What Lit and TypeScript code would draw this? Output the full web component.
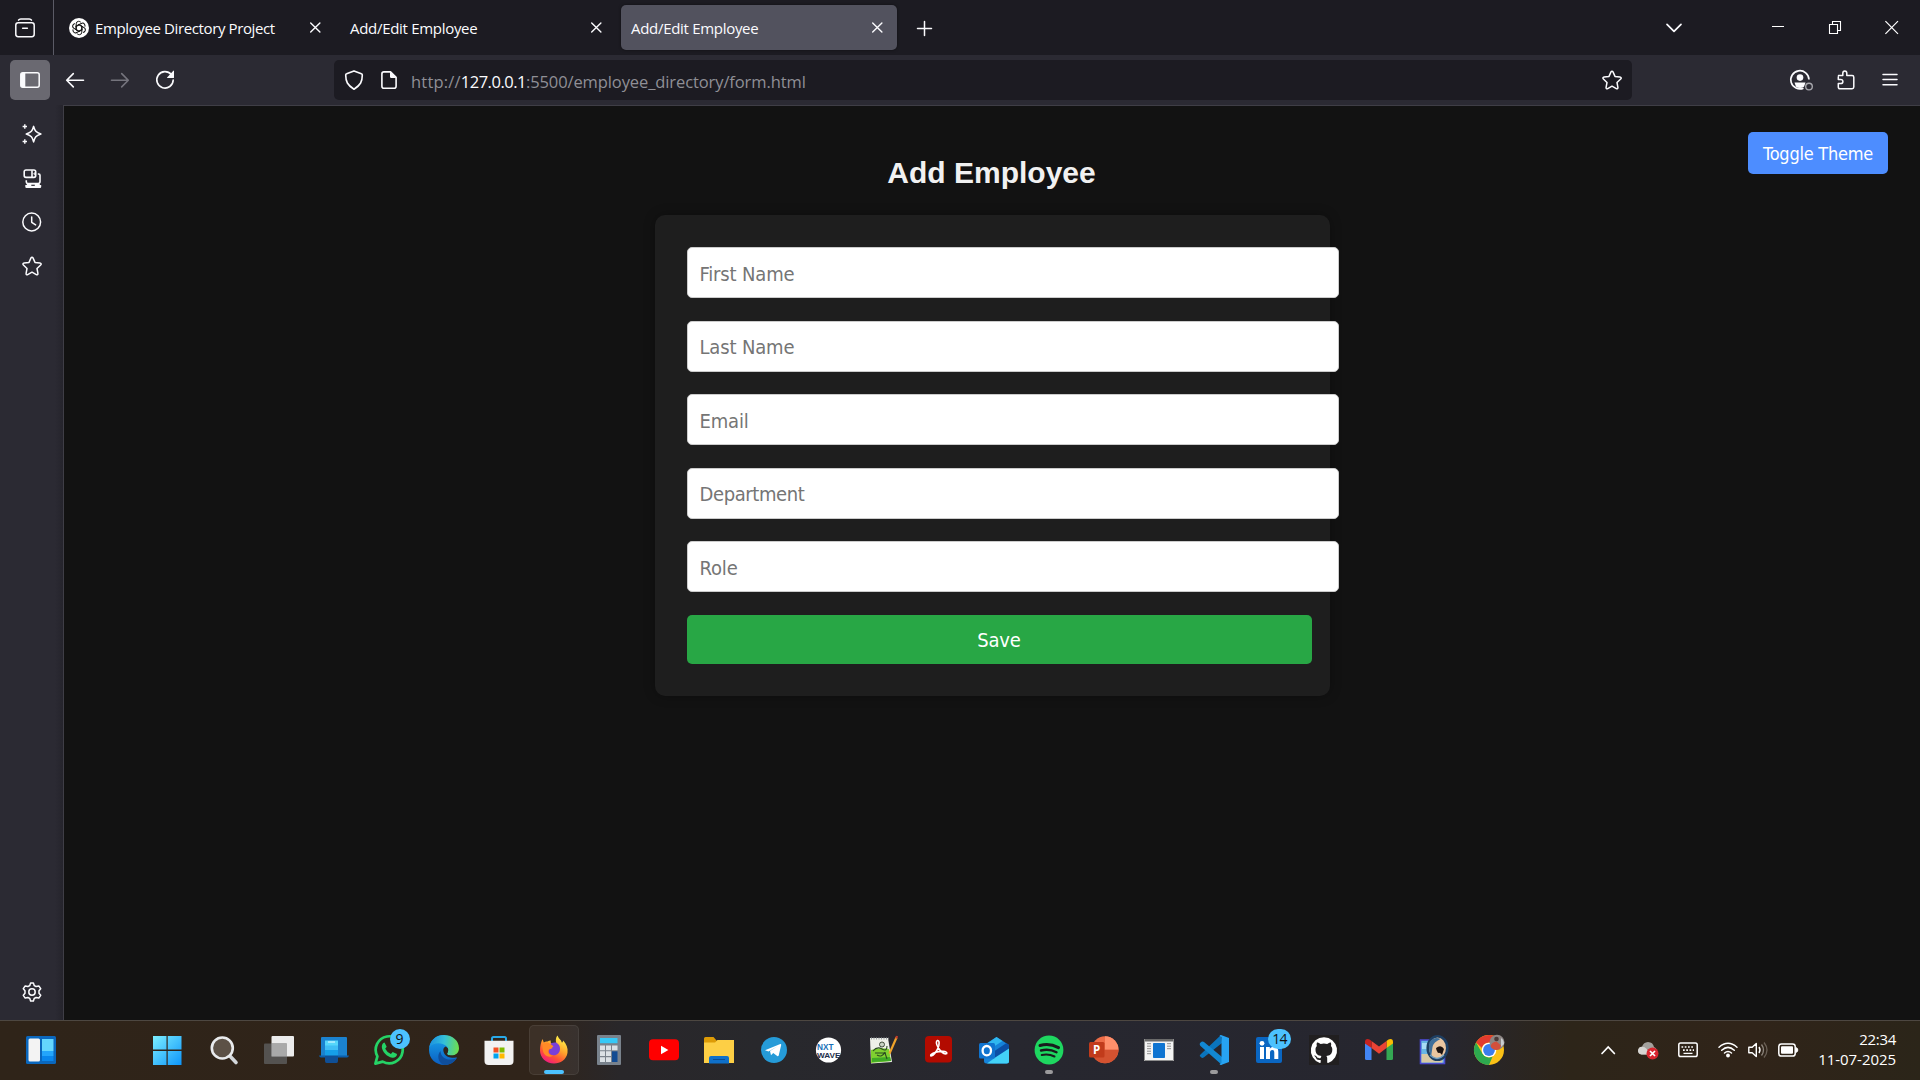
import { LitElement, html, svg, css, SVGTemplateResult } from "lit";
import { customElement } from "lit/decorators.js";

type Art = SVGTemplateResult;

const box = (w: number, h: number, view: string, art: Art) =>
  html`<svg class="icon" width=${w} height=${h} viewBox=${view} aria-hidden="true">${art}</svg>`;

/* ---------- browser glyphs, drawn on a 20 unit grid ---------- */
const STAR = svg`<path d="M10 1.2c.5 0 .8.3 1 .7l2 4.5 4.900.6c1.300.2 1.700 1.200.8 2L15 12.500l.9 4.900c.2 1.200-.7 1.700-1.600 1.200L10 16.200l-4.300 2.400c-1 .5-1.800 0-1.600-1.200L5 12.500 1.400 9c-.900-.9-.5-1.800.7-2L7 6.400l2-4.500c.2-.4.5-.7 1-.7z" fill="none" stroke="#fbfbfe" stroke-width="1.500" stroke-linejoin="round"/>`;

const G: Record<string, Art> = {
  archive: svg`<g fill="none" stroke="#fbfbfe" stroke-width="1.500"><path d="M3.500 2.200Q4.200.9 5.800.9h8.400q1.600 0 2.300 1.300" stroke-linecap="round"/><rect x=".8" y="4.800" width="18.400" height="13.900" rx="2.400"/><path d="M7.600 10.200h4.800" stroke-linecap="round"/></g>`,
  panel: svg`<rect x=".8" y="2.800" width="18.400" height="14.400" rx="2" fill="none" stroke="#fbfbfe" stroke-width="1.500"/><path d="M2 3h3.300v14H2L.9 16V4z" fill="#fbfbfe"/>`,
  back: svg`<path d="M18.500 10.300H2M8.300 3.600L1.700 10.300l6.600 6.600" fill="none" stroke="#fbfbfe" stroke-width="1.600" stroke-linecap="round" stroke-linejoin="round"/>`,
  forward: svg`<path d="M1.500 10.300H18M11.700 3.600l6.600 6.700-6.600 6.600" fill="none" stroke="#75747d" stroke-width="1.600" stroke-linecap="round" stroke-linejoin="round"/>`,
  reload: svg`<path d="M16.300 4.600A8.200 8.200 0 1 0 18.200 10" fill="none" stroke="#fbfbfe" stroke-width="1.600" stroke-linecap="round"/><path d="M19 1.200v6.300q0 .6-.6.6h-5.900q-.9 0-.4-.7l6-6.500q.9-.7.9.3z" fill="#fbfbfe"/>`,
  shield: svg`<path d="M10 .9l7.400 2.900q.9.300.9 1.300c0 6.400-1.700 10-8.300 14.100C3.400 15.100 1.700 11.500 1.700 5.100q0-1 .9-1.300z" fill="none" stroke="#fbfbfe" stroke-width="1.600" stroke-linejoin="round"/>`,
  page: svg`<path d="M4.900 1.900h6.600l5.600 5.500v8.800q0 2-2 2H4.900q-2 0-2-2V3.900q0-2 2-2z" fill="none" stroke="#fbfbfe" stroke-width="1.600" stroke-linejoin="round"/><path d="M11 1.500l6.500 6.500h-5.300q-1.200 0-1.200-1.200z" fill="#fbfbfe"/>`,
  star: STAR,
  sparkle: svg`<path d="M11.600 2.400c1.300 4.700 2.200 5.900 7.300 7.600-5.100 1.700-6 2.900-7.300 7.900-1.300-5-2.200-6.200-7.300-7.900 5.100-1.700 6-2.900 7.300-7.600z" fill="none" stroke="#fbfbfe" stroke-width="1.600" stroke-linejoin="round"/><path d="M2.800.3v4.400M.6 2.500H5M2.800 15.300v4.400M.6 17.500H5" stroke="#fbfbfe" stroke-width="1.400"/>`,
  devices: svg`<g transform="translate(.3 .7)"><g fill="none" stroke="#fbfbfe" stroke-width="1.600"><rect x="1.900" y="1.300" width="11.500" height="7.400" rx="1.800"/><path d="M9.700 1.500v7M4 11.600v1.600q0 1.600 1.700 1.600h10q2 0 2-2V6.500q0-1.200-1.200-1.200H15.500" /></g><path d="M12.500 3.200v3.600l-1.600-1.800zM3 16.300h15.900v1.800q0 1.200-1.200 1.200H4.200q-1.200 0-1.200-1.200zM4.500 15h13v2h-13z" fill="#fbfbfe"/><rect x="9" y="16" width="3.500" height="1.200" fill="#2b2a33"/></g>`,
  clock: svg`<g fill="none" stroke="#fbfbfe" stroke-width="1.500"><circle cx="9.700" cy="10" r="8.900"/><path d="M9.700 5v5.300l3.900 2.600" stroke-linecap="round" stroke-linejoin="round"/></g>`,
  gear: svg`<g fill="none" stroke="#fbfbfe" stroke-width="1.500" stroke-linejoin="round"><path d="M8.600.9h2.800l.8 2.600 1.900 1.100 2.700-.7 1.900 2.800-1.700 2v2.600l1.700 2-1.900 2.800-2.700-.7-1.900 1.100-.8 2.600H8.600l-.8-2.600-1.900-1.100-2.700.7-1.900-2.800 1.700-2V8.700l-1.700-2 1.900-2.800 2.700.7 1.900-1.100z"/><circle cx="10" cy="10" r="3.200"/></g>`,
  account: svg`<path d="M13.500 18.200A9.100 9.100 0 1 1 19 9.500" fill="none" stroke="#fbfbfe" stroke-width="1.700"/><circle cx="10" cy="7.600" r="3.300" fill="#fbfbfe"/><path d="M4.500 12.600h11l-1.500 4.200q-4 2.400-8 0z" fill="#fbfbfe"/><circle cx="19" cy="16.600" r="3.300" fill="#2b2a33" stroke="#a6a6ac" stroke-width="1.400"/>`,
  puzzle: svg`<path d="M2.500 5.500h4.300V3.200q0-2.300 2-2.300t2 2.300v2.300h5.300q1.700 0 1.700 1.700v9.900q0 1.700-1.700 1.700H4q-1.700 0-1.700-1.700v-3.500h2.400q2.200 0 2.200-2.100T4.700 9.400H2.300V6.800" fill="none" stroke="#fbfbfe" stroke-width="1.500" stroke-linejoin="round" stroke-linecap="round"/>`,
  menu: svg`<path d="M3 4.400h14M3 9.500h14M3 14.700h14" stroke="#fbfbfe" stroke-width="1.500" stroke-linecap="round"/>`,
  chevron: svg`<path d="M3 6.300l7 7 7-7" fill="none" stroke="#fbfbfe" stroke-width="1.700" stroke-linecap="round" stroke-linejoin="round"/>`,
  close: svg`<path d="M5.700 4.900l9.200 9.200M14.900 4.900l-9.200 9.200" stroke="#fbfbfe" stroke-width="1.400" stroke-linecap="round"/>`,
  plus: svg`<path d="M9.500 3.500v14M2.500 10.500h14" stroke="#fbfbfe" stroke-width="1.500" stroke-linecap="round"/>`,
  minimize: svg`<path d="M4 8.500h12" stroke="#fff"/>`,
  restore: svg`<path d="M4.500 6.500h8v9h-8zM7.500 6V3.500h8v9H13" fill="none" stroke="#fff" stroke-width="1.100"/>`,
  exit: svg`<path d="M3.400 3.200l12.600 12.600M16 3.200L3.400 15.800" stroke="#fff" stroke-width="1.200"/>`,
  gpt: svg`<circle cx="10" cy="10" r="10" fill="#fff"/><g fill="none" stroke="#111" stroke-width="1">${[0, 60, 120, 180, 240, 300].map(
    (a) => svg`<path transform="rotate(${a} 10 10)" d="M7.200 9.200V5.800q0-2.300 2.300-2.500 1.400 0 2.300.9M7.300 8.500l3-1.800 3.200 1.800"/>`)}</g>`,
};

const glyph = (name: string, size = 20) => box(size, size, "0 0 20 20", G[name]);

/* ---------- taskbar apps, drawn on a 30 unit grid ---------- */
interface App { id: string; art: Art; badge?: string; state?: "active" | "running" }

const APPS: App[] = [
  { id: "start", art: svg`<defs><linearGradient id="w" x1="0" y1="0" x2="30" y2="30" gradientUnits="userSpaceOnUse"><stop offset="0" stop-color="#7ef0ff"/><stop offset="1" stop-color="#0a93fb"/></linearGradient></defs><path d="M0 1h13.500v13.500H0zM14.700 1h13.800v13.500H14.700zM0 15.900h13.500V30H0zM14.700 15.900h13.800V30H14.700z" fill="url(#w)" transform="translate(-1 0)"/>` },
  { id: "search", art: svg`<path d="M19.500 19.500l7.500 8" stroke="#d3d7db" stroke-width="3.600" stroke-linecap="round"/><circle cx="13.300" cy="13" r="10.500" fill="#5c5146" stroke="#e9ebed" stroke-width="2.600"/>` },
  { id: "taskview", art: svg`<rect x="7.500" y="1" width="22.500" height="20.500" rx="1" fill="#ececec"/><rect x="0" y="8.500" width="23" height="20.500" rx="1" fill="#5a5a5a" opacity=".85"/><path d="M7.500 8.500H23v13H7.500z" fill="#a9a9a9"/>` },
  { id: "phone", art: svg`<rect x="2" y="2" width="26" height="20" rx="1" fill="#1b82cf"/><path d="M0 20.500h30q-.5 2-2 2H2q-1.500 0-2-2z" fill="#0b5fad"/><path d="M6 5.500h13V16H6z" fill="#55d6fb"/><path d="M6 10.500h13V16H6z" fill="#3fbef5"/><path d="M6 15h13v6H6z" fill="#169fe8"/><path d="M6 20.500h13V26q0 2-1.500 2h-10Q6 28 6 26z" fill="#0f4f96"/><path d="M9 7h7" stroke="#e9fbff"/>` },
  { id: "whatsapp", badge: "9", art: svg`<path d="M1.400 28.600l2-7.300A13.500 13.500 0 1 1 8.700 26.600z" fill="none" stroke="#25d366" stroke-width="2.700" stroke-linejoin="round"/><path d="M10.500 7.500l2.200 4.200-1.500 2q2 3.800 5.700 5.300l1.800-2 4.300 2.100c0 3-2.600 4-4.700 3.700C12.800 21.800 8.200 16.500 7.800 12c0-2 1-4.200 2.700-4.500z" fill="#25d366"/>` },
  { id: "edge", art: svg`<defs><linearGradient id="e1" x1="0" y1="8" x2="30" y2="12" gradientUnits="userSpaceOnUse"><stop offset="0" stop-color="#1c8fe0"/><stop offset=".5" stop-color="#35c1d8"/><stop offset="1" stop-color="#6fe04a"/></linearGradient><linearGradient id="e2" x1="0" y1="8" x2="0" y2="28" gradientUnits="userSpaceOnUse"><stop offset="0" stop-color="#1593e2"/><stop offset="1" stop-color="#0c62c4"/></linearGradient></defs><path d="M0 15C0 6 6.500 0 15 0c4 2 9 8 7 12l-5 2c-1 5 4 8.500 9 8.500.8 0 1.700-.2 1.900.2C25 27.500 20.500 30 15.500 30 6.500 30 0 23.500 0 15z" fill="url(#e2)"/><path d="M.3 12.500C1.800 4.600 8 0 15 0c8.800 0 15 6 15 13.200 0 4.500-3.300 7.300-7.300 7.300-3 0-5.200-1-4.500-2.300 1.500-2.400 1.500-5.500-1.200-7.400C12.500 7 4 7.500.3 12.500z" fill="url(#e1)"/><path d="M11.500 16c0 5.500 5 9 10.500 8.500 2.600-.2 4.800-.7 5.900-1.800C25 27.500 20.500 30 15.500 30 9 28.500 7.500 20 11.500 16z" fill="#0f4e9c"/><path d="M16.800 11.400c3 1.700 2.800 4.600 1.400 6.800-.7 1.400 1.500 2.300 4.500 2.300 1.800 0 3.300-.5 4.600-1.300l.8 2.300c-5 2.600-12.600 1-13.700-5.500-.4-2.400.4-3.600 2.400-4.600z" fill="#30241b"/>` },
  { id: "store", art: svg`<path d="M8 7V3.500q0-1.500 1.500-1.500h11Q22 2 22 3.500V7" fill="none" stroke="#29a9e8" stroke-width="2"/><path d="M.5 5.800h29V26q0 4-4 4h-21q-4 0-4-4z" fill="#f2f2f2"/><path d="M9.500 12.500h5v5h-5z" fill="#f25022"/><path d="M15.500 12.500h5v5h-5z" fill="#7fba00"/><path d="M9.500 18.500h5v5h-5z" fill="#00a4ef"/><path d="M15.500 18.500h5v5h-5z" fill="#ffb900"/>` },
  { id: "firefox", state: "active", art: svg`<defs><linearGradient id="ff" x1="22" y1="2" x2="7" y2="28" gradientUnits="userSpaceOnUse"><stop offset="0" stop-color="#fff24a"/><stop offset=".4" stop-color="#ffa52c"/><stop offset=".7" stop-color="#ff5333"/><stop offset="1" stop-color="#f0138c"/></linearGradient></defs><path d="M3.500 4l1.300 3.500Q6.500 6.200 8.500 6.500q1.500-1 3.200-1-.2 2 .5 3l5-.5Q16 3.500 18.500.5q1 3 3.500 5 .5 1.300 1 2.200 1-.8 1.200-2.200c3.200 3.500 5 7.500 4.300 12.200C27.500 24.500 21.500 28.500 15 28.500 7 28.500 1 22.500 1 15.500 1 11 2 7 3.500 4z" fill="url(#ff)"/><path d="M10 10.500q2-3.500 7-3 4 2 4 6.300c0 4-3 6.700-6.500 6.500-4.500-.3-6-4-4-6l3-1.300z" fill="#7a3fd8"/><path d="M3.500 9.500q4-3.500 7.500-.7l3.500 2.400-2.300 2.300q-2.700.3-3 2.200 0 4.500 5 5-7 3-10-3.700Q3.200 13 3.500 9.500z" fill="#ff8a26"/>` },
  { id: "calc", art: svg`<rect x="3" y="0" width="24" height="30" rx="1" fill="#79828c"/><path d="M6 3h17.500v5.200H6z" fill="#35c8f6"/><path d="M6 10.500h5v4.800H6zM12 10.500h5v4.800h-5zM18 10.500h5.500v4.800H18zM6 16.300h5v4.800H6zM12 16.300h5v4.800h-5zM6 22.200h5V27H6zM12 22.200h5V27h-5z" fill="#dbe1e6"/><path d="M18 16.300h5.500V27H18z" fill="#124b92"/>` },
  { id: "youtube", art: svg`<rect x="0" y="4.300" width="30" height="21" rx="4" fill="#f00"/><path d="M12 10.800v8.500l7.400-4.250z" fill="#fff"/>` },
  { id: "folder", art: svg`<path d="M0 3.500Q0 2 1.500 2h8l3 3.500H16V12H0z" fill="#dd9b06"/><path d="M0 7.500h11L13.500 5H30v23H0z" fill="#fdcf45"/><path d="M5 28.500V23q0-2 2-2h16q2 0 2 2v5.500z" fill="#0f70c9"/><path d="M9 24.500h12" stroke="#0a4c93"/>` },
  { id: "telegram", art: svg`<circle cx="15" cy="15" r="13" fill="#259bd8"/><path d="M6 15.300l15.300-6.200q1-.2.9.9L19.700 20.500q-.4 1.200-1.500.6l-4-3-2.200 2.100-1-4.200 8-5-9.500 5.400z" fill="#fff"/>` },
  { id: "nxt", art: svg`<circle cx="14.500" cy="15" r="12.600" fill="#fff"/><g font-family="Liberation Sans, sans-serif" font-weight="bold"><text x="3" y="14.500" font-size="9" textLength="16.500" lengthAdjust="spacingAndGlyphs" fill="#176fb8">NXT</text><text x="3" y="22.500" font-size="8" textLength="23.500" lengthAdjust="spacingAndGlyphs" fill="#1d2f4c">WAVE</text></g>` },
  { id: "notepad", art: svg`<path d="M1 3h18l4 24-21 1.500z" fill="#eef0e8"/><path d="M2 15q9-3 18-1l2 12-20 2z" fill="#7fd030"/><path d="M3 23l18-1 1.200 4L3 27z" fill="#3faa25"/><path d="M2 3.500h18" stroke="#9aa0a6" stroke-dasharray="1 1.500" stroke-width="2"/><circle cx="13" cy="9.500" r="2.500" fill="#c9d3c4" stroke="#33402e" stroke-width=".9"/><path d="M4 16q4-5 9-2t5-3M8 20q5 3 8-3M6 18h11M16 18l2 6" fill="none" stroke="#2b4a22" stroke-width="1.100"/><path d="M27.500 2.500l-7 16" stroke="#efa32a" stroke-width="2.200"/><path d="M28 1l-.8 2.500" stroke="#c33b2c" stroke-width="2.200"/>` },
  { id: "acrobat", art: svg`<rect x="1" y="1" width="27" height="26.500" rx="4" fill="#b30b00"/><path d="M13.500 5.500q2.300-.3 1.300 5-1.500 6-6 9.800-2.800 1.500-1.800-.6 4-3.500 12-3.300 4.500.4 3.700 2.200-2 1-4.700-1.300-5-5-5.600-9.300-.1-2.200 1.100-2.500z" fill="none" stroke="#fff" stroke-width="1.600"/>` },
  { id: "outlook", art: svg`<path d="M5 10L17.500 2 30 10v16q0 2.500-2.500 2.500h-20Q5 28.500 5 26z" fill="#1683d9"/><path d="M6 10l11.500-8 6 4L8 16z" fill="#2fb7ef"/><path d="M27.500 8l2.500 2v5L17 23l-6-4z" fill="#0b4fa5"/><path d="M30 13.500V26q0 2.500-2.500 2.500H8L17 22z" fill="#43d2f7"/><rect x="0" y="8" width="16" height="15.500" rx="1.500" fill="#1074cf"/><ellipse cx="7.800" cy="15.700" rx="4.200" ry="4.700" fill="none" stroke="#fff" stroke-width="2.300"/>` },
  { id: "spotify", state: "running", art: svg`<circle cx="15" cy="15" r="14.400" fill="#1ed760"/><g fill="none" stroke="#191c1d" stroke-linecap="round"><path d="M6 10.500q9.500-2.700 18.500 2.100" stroke-width="3"/><path d="M7 15.500q8-2.200 15.500 1.700" stroke-width="2.400"/><path d="M7.700 20q6.800-1.600 12.800 1.500" stroke-width="2"/></g>` },
  { id: "powerpoint", art: svg`<circle cx="16" cy="14.700" r="13.500" fill="#ed6c47"/><path d="M16 1.200a13.500 13.500 0 0 1 13.500 13.500H16z" fill="#ff8f6b"/><path d="M2.500 14.700h27a13.500 13.500 0 0 1-27 0z" fill="#d35230"/><rect x="0" y="7" width="15.500" height="15.500" rx="1.500" fill="#c13b1b"/><text x="7.700" y="19" text-anchor="middle" font-family="Open Sans, sans-serif" font-weight="bold" font-size="11.500" fill="#fff">P</text>` },
  { id: "window", art: svg`<path d="M0 4h30v22H0z" fill="#f4f4f4"/><path d="M0 4h30v2.500H0z" fill="#6b6b6b"/><path d="M.5 4v21.500h29V4" fill="none" stroke="#8d8d8d"/><rect x="9" y="8" width="12" height="15" rx=".8" fill="#0f74d1"/><path d="M3 8.700h4M3 11.200h4M3 13.700h4M3 16.200h4M3 18.700h4M23 8.700h4M23 11.200h4M23 13.700h4" stroke="#8f8f8f"/>` },
  { id: "vscode", state: "running", art: svg`<path d="M22 0L2.500 18.500q-2 1.500-1.800 2.500l2 1.800q1 .5 2.300-.6L23 8z" fill="#0a74bd"/><path d="M.7 9q-.2-1 1.800-2.200 1.300-.8 2.500.2L23 22v8L1.500 11q-.8-1-.8-2z" fill="#1288d3"/><path d="M22 0l8 3v24l-8 3q-1 0-1.500-1l2-1V2l-2-1Q21 0 22 0z" fill="#27a3f2"/>` },
  { id: "linkedin", badge: "14", art: svg`<rect x="2" y="2" width="26" height="26" rx="2" fill="#0a66c2"/><g fill="#fff"><circle cx="8" cy="8.300" r="2.400"/><path d="M6 12h4v12H6zM12 12h3.800v1.700q1.200-2 4-2c4 0 4.500 2.700 4.500 5.600V24h-4v-6c0-1.800-.3-2.900-2-2.900s-2.300 1.300-2.300 2.900v6h-4z"/></g>` },
  { id: "github", art: svg`<path d="M0 0h30v30H0z" fill="#211f20"/><path d="M15 2.200a13.200 13.200 0 0 0-4.200 25.700c.7.100.9-.3.900-.7v-2.300c-3.700.8-4.500-1.700-4.500-1.700-.6-1.500-1.500-2-1.500-2-1.200-.8.100-.8.100-.8 1.300.1 2 1.400 2 1.400 1.200 2 3.100 1.400 3.900 1.100.1-.9.500-1.400.8-1.800-2.900-.3-6-1.500-6-6.500 0-1.400.5-2.600 1.400-3.500-.2-.3-.6-1.700.1-3.500 0 0 1.100-.3 3.600 1.400a12.500 12.500 0 0 1 6.600 0c2.500-1.700 3.600-1.400 3.600-1.400.7 1.800.3 3.200.1 3.500.9.900 1.400 2.100 1.400 3.500 0 5-3.100 6.200-6 6.500.5.400.9 1.200.9 2.400v3.700c0 .4.200.8.900.7A13.200 13.200 0 0 0 15 2.200z" fill="#fff"/>` },
  { id: "gmail", art: svg`<path d="M1 8v15.500Q1 25 2.500 25H7.500V12z" fill="#4285f4"/><path d="M29 8v15.500q0 1.500-1.500 1.500H22.500V12z" fill="#34a853"/><path d="M22.500 6v7L29 8.500V7q0-2.700-2.500-2.900-1.200 0-2 .5z" fill="#fbbc04"/><path d="M7.500 13V6L15 11.500 22.500 6v7L15 18.700z" fill="#ea4335"/><path d="M1 8.500V7q0-2.700 2.500-2.900 1.200 0 2 .5l2 1.500v7z" fill="#c5221f"/>` },
  { id: "viewer", art: svg`<rect x="1.500" y="5" width="24" height="23.500" fill="#69b7e5" stroke="#4b4bd0" stroke-width="1.600"/><path d="M2.500 19h21v8.500h-21z" fill="#d9c9a4"/><path d="M3 8h12v6H3z" fill="#a9dcf5"/><ellipse cx="18.500" cy="13" rx="9.800" ry="11.800" fill="#e9c6a0" stroke="#1e3f63" stroke-width="2.600"/><path d="M10.500 7q5-6 11-3-7 3-8 8l-1.500 10q-3-8-1.500-15z" fill="#3e6f9a"/><path d="M17 13q5-4 8 1l-2 6q-2-3-4-2-2-3-2-5z" fill="#1c1310"/><path d="M11 20q7 7 14 0" fill="none" stroke="#6d9ec0" stroke-width="1.300"/>` },
  { id: "chrome", art: svg`<circle cx="15" cy="15" r="15" fill="#fbc116"/><path d="M2 7.500A15 15 0 0 1 28 7.500H15A7.500 7.500 0 0 0 8 13z" fill="#e33b2e"/><path d="M2 7.500l6.500 11.300Q11 22.500 15 22.500q2 0 3.500-.8L15 30A15 15 0 0 1 2 7.500z" fill="#2da94f"/><circle cx="15" cy="15" r="7.300" fill="#fff"/><circle cx="15" cy="15" r="5.900" fill="#3b7ded"/><circle cx="23" cy="7.300" r="7.500" fill="#8c8583"/><path d="M16.500 11.500q1-4.500 6-5l4.500 4-1.500 3.800q-6 2-9-2.800z" fill="#d2503c"/><circle cx="22.500" cy="4" r="2.300" fill="#4a3a38"/><path d="M27 3q3 2 3 6l-3 3z" fill="#c9cdd0"/>` },
];

const TRAY: Record<string, Art> = {
  up: svg`<path d="M4 13.500l6.200-6.600 6.200 6.600" fill="none" stroke="#fff" stroke-width="1.700" stroke-linecap="round"/>`,
  cloud: svg`<path d="M3.500 14.500Q0 14 0 10.500q.5-3.500 4-3.700 1.500-4.500 6-4.800 5 .2 6 5 2.800 1 2.500 4-.5 3.500-3.500 3.500z" fill="#a3a19d"/><path d="M3.500 14.500Q0 14 0 10.500q.5-3.500 4-3.700 3 0 4.500 2l4 5.700z" fill="#d6d5d2"/><circle cx="14.500" cy="13.500" r="6" fill="#d8262f"/><path d="M12 11l5 5M17 11l-5 5" stroke="#fff" stroke-width="1.700"/>`,
  keyboard: svg`<rect x=".8" y="3" width="18.400" height="13.600" rx="1.800" fill="none" stroke="#fff" stroke-width="1.500"/><path d="M3.500 7h13M5 10.200h11" stroke="#fff" stroke-width="1.700" stroke-dasharray="1.700 1.550"/><path d="M5.500 13.400h9" stroke="#fff" stroke-width="1.300"/>`,
  wifi: svg`<g fill="none" stroke="#fff" stroke-width="1.500" stroke-linecap="round"><path d="M1 7.200q9-8 18 0M3.700 10.300q6.300-5.800 12.600 0M6.500 13q3.500-3 7 0"/></g><circle cx="10" cy="15.500" r="1.900" fill="#fff"/>`,
  sound: svg`<path d="M.8 7.300h3.400L8.300 3.400v13.200l-4.100-3.900H.8z" fill="none" stroke="#fff" stroke-width="1.400" stroke-linejoin="round"/><path d="M11 7q2 3 0 6" fill="none" stroke="#fff" stroke-width="1.400"/><path d="M13.500 4.500q4 5.500 0 11" fill="none" stroke="#8d857c" stroke-width="1.300"/><path d="M16 2.500q6 7.500 0 15" fill="none" stroke="#6a6056" stroke-width="1.300"/>`,
  battery: svg`<rect x=".8" y="4" width="16.400" height="12" rx="2.600" fill="none" stroke="#fff" stroke-width="1.500"/><rect x="3" y="6.300" width="12" height="7.400" rx="1" fill="#fff"/><path d="M18 7.700q1.800.3 1.800 2.300T18 12.300z" fill="#fff" stroke="#fff"/>`,
};

/* ---------- elements ---------- */

@customElement("tab-strip")
export class TabStrip extends LitElement {
  static styles = css`
    :host { display: flex; height: 55px; background: #1c1b22; color: #fbfbfe; font: 15px/20px "Open Sans", sans-serif; }
    .icon { display: block; flex: none; }
    .library { width: 54px; padding: 18px 0 0 15px; box-sizing: border-box; border-right: 1px solid #5b5b66; }
    .tab { display: flex; align-items: center; height: 45px; margin-top: 5px; box-sizing: border-box; border-radius: 5px; padding: 0 10px; }
    .first { width: 276px; margin-left: 5px; }
    .second, .third { width: 276px; margin-left: 5px; }
    .third { background: #52525e; box-shadow: 0 0 3px rgba(0, 0, 0, .5); }
    .title { flex: 1; white-space: nowrap; letter-spacing: -.3px; }
    .first .title { margin-left: 6px; letter-spacing: -.38px; }
    .plus { margin: 18px 0 0 18px; }
    .space { flex: 1; }
    .list { margin: 18px 84px 0 0; }
    .win { display: flex; padding: 18px 18px 0 0; gap: 37px; }
  `;
  render() {
    return html`
      <div class="library">${glyph("archive")}</div>
      <div class="tab first">${glyph("gpt")}<span class="title">Employee Directory Project</span>${glyph("close")}</div>
      <div class="tab second"><span class="title">Add/Edit Employee</span>${glyph("close")}</div>
      <div class="tab third"><span class="title">Add/Edit Employee</span>${glyph("close")}</div>
      <div class="plus">${glyph("plus")}</div>
      <div class="space"></div>
      <div class="list">${glyph("chevron")}</div>
      <div class="win">${glyph("minimize")}${glyph("restore")}${glyph("exit")}</div>`;
  }
}

@customElement("nav-bar")
export class NavBar extends LitElement {
  static styles = css`
    :host { display: flex; height: 50px; background: #2b2a33; padding: 5px 20px 0 10px; box-sizing: border-box; }
    .icon { display: block; flex: none; }
    .btn { width: 40px; height: 40px; display: grid; place-items: center; border-radius: 5px; margin-right: 5px; }
    .on { background: #6a6971; }
    .url { display: flex; align-items: center; width: 1298px; height: 40px; box-sizing: border-box; margin-left: 144px; padding: 0 10px; background: #1c1b22; border-radius: 5px; font: 16.5px/22px "Open Sans", sans-serif; color: #8f8f96; white-space: nowrap; }
    .addr { flex: 1; margin-left: 12px; padding-top: 3px; display: flex; }
    .page { margin-left: 15px; }
    .scheme { letter-spacing: .2px; }
    .host { color: #fbfbfe; letter-spacing: -.5px; }
    .path { letter-spacing: -.1px; }
    .right { display: flex; gap: 22px; padding-top: 10px; margin-left: auto; }
    .right .icon { overflow: visible; }
    .right .icon:first-child { margin-right: 4px; }
    .right .icon:nth-child(2) { margin-right: 2px; }
  `;
  render() {
    return html`
      <div class="btn on">${glyph("panel")}</div>
      <div class="btn">${glyph("back")}</div>
      <div class="btn">${glyph("forward")}</div>
      <div class="btn">${glyph("reload")}</div>
      <div class="url">
        ${glyph("shield")}<span class="page">${glyph("page")}</span>
        <div class="addr"><span class="scheme">http://</span><span class="host">127.0.0.1</span><span class="path">:5500/employee_directory/form.html</span></div>
        ${glyph("star")}
      </div>
      <div class="right">${glyph("account")}${glyph("puzzle")}${glyph("menu")}</div>`;
  }
}

@customElement("side-rail")
export class SideRail extends LitElement {
  static styles = css`
    :host { display: flex; flex-direction: column; align-items: center; gap: 24px; width: 63px; padding: 19px 0 18px; box-sizing: border-box; background: linear-gradient(90deg, #2b2a33 55px, #25242c); }
    .icon { display: block; overflow: visible; }
    .end { margin-top: auto; }
  `;
  render() {
    return html`${glyph("sparkle")}${glyph("devices")}${glyph("clock")}${glyph("star")}<div class="end">${glyph("gear")}</div>`;
  }
}

@customElement("employee-form")
export class EmployeeForm extends LitElement {
  static styles = css`
    :host { display: block; position: relative; background: #121212; border: 1px solid #3f3e46; border-width: 1px 0 0 1px; color: #f1f1f1; box-sizing: border-box; }
    .theme { position: absolute; top: 26px; right: 32px; width: 140px; height: 42px; border: 0; border-radius: 5px; background: #4d8dff; color: #fff; font: 18px/24px "DejaVu Sans Condensed", sans-serif; letter-spacing: -.25px; padding: 1px 0 0; white-space: nowrap; }
    .title { margin: 49px 1px 0 0; text-align: center; font: bold 30px/36px "Liberation Sans", sans-serif; }
    .card { width: 675px; height: 481px; box-sizing: border-box; margin: 24px auto 0; padding: 32px; border-radius: 10px; background: #1e1e1e; box-shadow: 0 0 12px rgba(0, 0, 0, .3); }
    .field { display: block; width: 652px; height: 51px; box-sizing: border-box; margin: 0 0 22.5px; padding: 2px 12px 0; border: 1px solid #ccc; border-radius: 5px; background: #fff; font: 20px/26px "DejaVu Sans Condensed", sans-serif; letter-spacing: -.15px; }
    .field::placeholder { color: #757575; opacity: 1; }
    .tight { letter-spacing: -.4px; }
    .save { display: block; width: 625px; height: 49px; border: 0; border-radius: 5px; background: #28a745; color: #fff; font: 20px/26px "DejaVu Sans Condensed", sans-serif; padding: 2px 0 0; letter-spacing: -.2px; }
  `;
  render() {
    return html`
      <button class="theme">Toggle Theme</button>
      <h2 class="title">Add Employee</h2>
      <form class="card">
        ${["First Name", "Last Name", "Email", "Department", "Role"].map(
          (p) => html`<input class=${p === "Department" ? "field tight" : "field"} placeholder=${p}>`)}
        <button class="save" type="button">Save</button>
      </form>`;
  }
}

@customElement("task-bar")
export class TaskBar extends LitElement {
  static styles = css`
    :host { display: flex; height: 60px; box-sizing: border-box; border-top: 1px solid #4d4741; background: linear-gradient(90deg, #2f2419 0, #30241a 540px, #29272a 620px, #28282c 760px, #27272f 1000px, #26262f 1440px, #2d2519 1570px, #302419 1750px, #2b2519 1920px); color: #fff; font: 15px/20px "Open Sans", sans-serif; }
    .icon { display: block; overflow: visible; }
    .widgets { width: 141.5px; box-sizing: border-box; padding: 14px 0 0 26px; }
    .app { position: relative; width: 55px; height: 59px; display: flex; justify-content: center; padding-top: 14px; box-sizing: border-box; }
    .active::before { content: ""; position: absolute; left: 2.5px; top: 4px; width: 50px; height: 50px; box-sizing: border-box; border-radius: 5px; background: rgba(255, 255, 255, .06); border: 1px solid rgba(255, 255, 255, .07); }
    .app .icon { position: relative; }
    .active::after, .running::after { content: ""; position: absolute; top: 49px; height: 4px; border-radius: 2px; }
    .active::after { left: 17.5px; width: 20px; background: #4cc2ff; }
    .running::after { left: 23.5px; width: 8px; background: #9b9a9c; }
    .badge { position: absolute; left: 26.5px; top: 8px; width: 23px; height: 20px; border-radius: 10px; background: #4cc2ff; color: #111; font-size: 14px; line-height: 20px; text-align: center; letter-spacing: -.8px; }
    .one { left: 28px; width: 20px; letter-spacing: 0; }
    .tray { display: flex; align-items: flex-start; padding-top: 19px; margin-left: auto; }
    .tray .icon + .icon { margin-left: 20px; }
    .tray .icon:nth-child(n + 5) { margin-left: 10px; }
    .clock { width: 98px; padding-top: 8px; margin-right: 24px; text-align: right; white-space: nowrap; letter-spacing: -.3px; }
    .date { letter-spacing: -.05px; }
  `;
  render() {
    return html`
      <div class="widgets">${box(30, 30, "0 0 30 30", svg`<rect x="0" y="1" width="30" height="28" rx="1.500" fill="#0a67bd"/><rect x="2.500" y="3.500" width="11.500" height="23" rx="1.500" fill="#f3f3f3"/><path d="M16 4h11.500v12H16z" fill="#64d6fd"/><path d="M16 16h11.500v5H16z" fill="#23a5fb"/><path d="M16 21h11.500v5H16z" fill="#0986ec"/>`)}</div>
      ${APPS.map((a) => html`<div class="app ${a.state ?? ""}">${box(30, 30, "0 0 30 30", a.art)}${
        a.badge ? html`<span class="badge ${a.badge.length === 1 ? "one" : ""}">${a.badge}</span>` : ""}</div>`)}
      <div class="tray">${["up", "cloud", "keyboard", "wifi", "sound", "battery"].map((n) => box(20, 20, "0 0 20 20", TRAY[n]))}</div>
      <div class="clock"><div>22:34</div><div class="date">11-07-2025</div></div>`;
  }
}

@customElement("app-root")
export class AppRoot extends LitElement {
  static styles = css`
    :host { display: flex; flex-direction: column; width: 1920px; height: 1080px; overflow: hidden; background: #121212; }
    .body { display: flex; flex: 1; min-height: 0; }
    .grow { flex: 1; }
  `;
  render() {
    return html`
      <tab-strip></tab-strip>
      <nav-bar></nav-bar>
      <div class="body"><side-rail></side-rail><employee-form class="grow"></employee-form></div>
      <task-bar></task-bar>`;
  }
}
